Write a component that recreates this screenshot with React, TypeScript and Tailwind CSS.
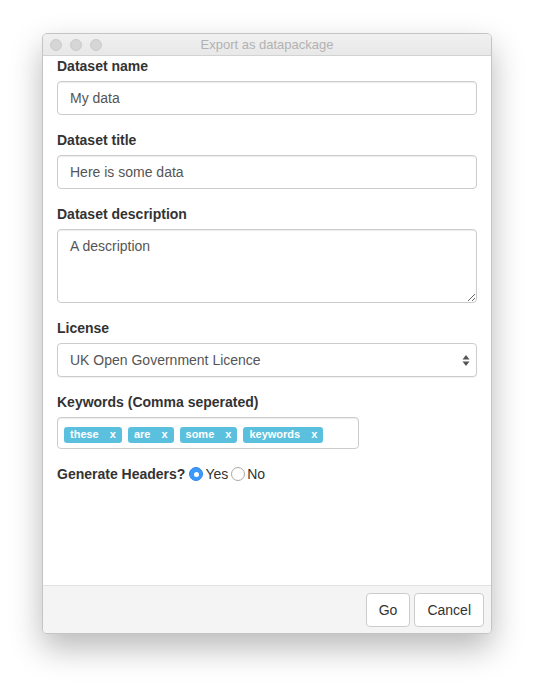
import { useState } from "react";

const keywords = ["these", "are", "some", "keywords"];

const labelCls = "block text-[14px] font-bold leading-5 text-[#333] mb-[5px]";
const inputCls =
  "block w-full h-[34px] px-3 border border-[#ccc] rounded-[4px] text-[14px] text-[#555] bg-white shadow-[inset_0_1px_1px_rgba(0,0,0,0.075)] outline-none";

export default function App() {
  const [headers, setHeaders] = useState("yes");

  return (
    <div
      className="w-[534px] h-[684px] bg-white pt-[33px] pl-[42px]"
      style={{ fontFamily: '"Liberation Sans", Arimo, Arial, sans-serif' }}
    >
      <div className="w-[450px] h-[601px] flex flex-col rounded-[5px] border border-[#c4c4c4] bg-white overflow-hidden shadow-[0_14px_32px_rgba(0,0,0,0.28)]">
        {/* title bar */}
        <div className="relative h-[22px] shrink-0 flex items-center justify-center bg-gradient-to-b from-[#f0f0f0] to-[#e8e8e8] border-b border-[#d2d2d2]">
          <div className="absolute left-[7px] top-[5px] flex gap-2">
            <span className="w-3 h-3 rounded-full bg-[#d6d6d6] border border-[#cbcbcb]"></span>
            <span className="w-3 h-3 rounded-full bg-[#d6d6d6] border border-[#cbcbcb]"></span>
            <span className="w-3 h-3 rounded-full bg-[#d6d6d6] border border-[#cbcbcb]"></span>
          </div>
          <span className="text-[13px] text-[#b2b2b2]">Export as datapackage</span>
        </div>

        {/* form */}
        <div className="flex-1 px-[14px]">
          <div className="mb-[15px]">
            <label className={labelCls}>Dataset name</label>
            <input className={inputCls} defaultValue="My data" />
          </div>
          <div className="mb-[15px]">
            <label className={labelCls}>Dataset title</label>
            <input className={inputCls} defaultValue="Here is some data" />
          </div>
          <div className="mb-[15px]">
            <label className={labelCls}>Dataset description</label>
            <textarea
              className="block w-full h-[74px] px-3 py-[6px] border border-[#ccc] rounded-[4px] text-[14px] leading-5 text-[#555] bg-white shadow-[inset_0_1px_1px_rgba(0,0,0,0.075)] outline-none resize-y"
              defaultValue="A description"
            />
          </div>
          <div className="mb-[15px]">
            <label className={labelCls}>License</label>
            <div className="flex items-center justify-between h-[34px] pl-3 pr-[6px] border border-[#ccc] rounded-[4px] text-[14px] text-[#555] bg-white shadow-[0_1px_1px_rgba(0,0,0,0.06)]">
              <span>UK Open Government Licence</span>
              <svg width="8" height="13" viewBox="0 0 8 13">
                <path d="M4 1 L7.5 5.5 H0.5 Z" fill="#555" />
                <path d="M4 12 L7.5 7.5 H0.5 Z" fill="#555" />
              </svg>
            </div>
          </div>
          <div className="mb-[15px]">
            <label className={labelCls}>Keywords (Comma seperated)</label>
            <div className="w-[302px] h-[32px] flex items-center gap-[6px] pl-[6px] pt-[3px] border border-[#ccc] rounded-[4px] bg-white shadow-[inset_0_1px_1px_rgba(0,0,0,0.075)]">
              {keywords.map((k) => (
                <span
                  key={k}
                  className="flex items-center h-4 px-[6px] rounded-[3px] bg-[#5bc0de] text-white text-[11px] font-bold"
                >
                  {k}
                  <span className="ml-[11px]">x</span>
                </span>
              ))}
            </div>
          </div>
          <div className="flex items-center h-5 mt-[1px] text-[14px] text-[#333]">
            <span className="font-bold mr-[4px]">Generate Headers?</span>
            <label className="flex items-center cursor-pointer" onClick={() => setHeaders("yes")}>
              <span
                className={
                  headers === "yes"
                    ? "w-[14px] h-[14px] rounded-full bg-[#3b99fc] border border-[#2f88ea] flex items-center justify-center"
                    : "w-[14px] h-[14px] rounded-full bg-white border border-[#a9a9a9]"
                }
              >
                {headers === "yes" && <span className="w-[5px] h-[5px] rounded-full bg-white"></span>}
              </span>
              <span className="ml-[2px]">Yes</span>
            </label>
            <label className="flex items-center ml-[3px] cursor-pointer" onClick={() => setHeaders("no")}>
              <span
                className={
                  headers === "no"
                    ? "w-[14px] h-[14px] rounded-full bg-[#3b99fc] border border-[#2f88ea] flex items-center justify-center"
                    : "w-[14px] h-[14px] rounded-full bg-white border border-[#a9a9a9]"
                }
              >
                {headers === "no" && <span className="w-[5px] h-[5px] rounded-full bg-white"></span>}
              </span>
              <span className="ml-[2px]">No</span>
            </label>
          </div>
        </div>

        {/* footer */}
        <div className="h-[48px] shrink-0 flex items-start justify-end gap-1 pt-[7px] pr-[7px] bg-[#f4f4f4] border-t border-[#e2e2e2]">
          <button className="h-[34px] px-3 border border-[#ccc] rounded-[4px] bg-white text-[14px] text-[#333]">
            Go
          </button>
          <button className="h-[34px] px-3 border border-[#ccc] rounded-[4px] bg-white text-[14px] text-[#333]">
            Cancel
          </button>
        </div>
      </div>
    </div>
  );
}
